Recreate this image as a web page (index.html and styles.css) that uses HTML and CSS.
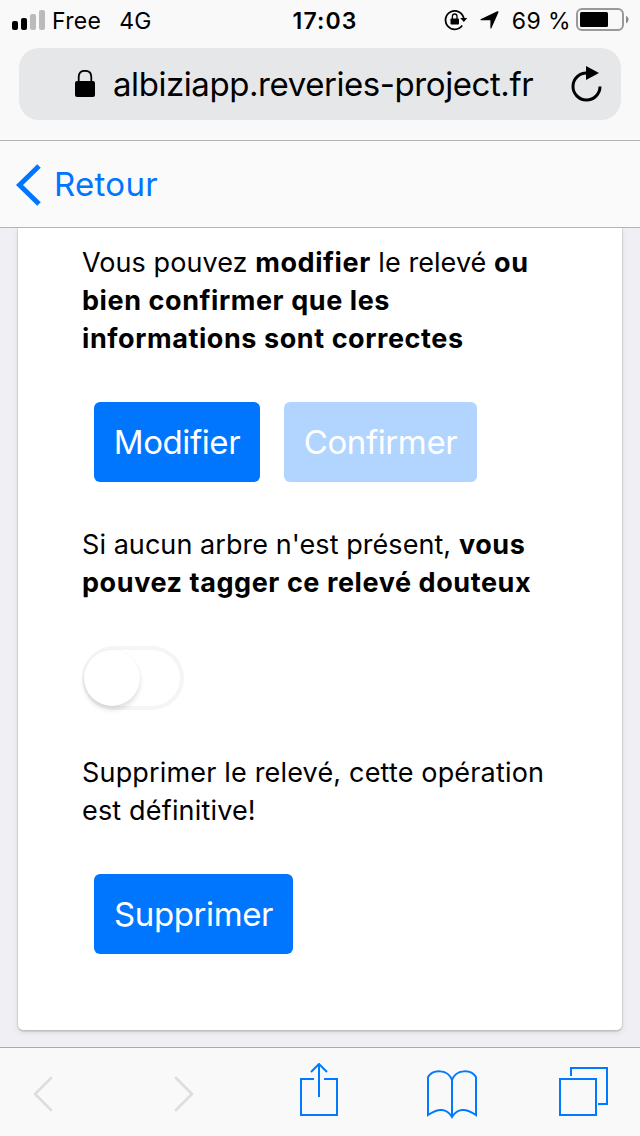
FILE: index.html
```html
<!DOCTYPE html>
<html lang="fr">
<head>
<meta charset="utf-8">
<title>Albiziapp</title>
<link rel="stylesheet" href="styles.css">
</head>
<body>
<header class="browser">
  <div class="status">
    <div class="carrier">
      <svg class="signal" width="34" height="20" viewBox="0 0 34 20"><rect x="0" y="11" width="6" height="9" rx="2"/><rect x="9" y="8" width="6" height="12" rx="2"/><rect class="dim" x="18" y="4" width="6" height="16" rx="2"/><rect class="dim" x="27" y="0" width="6" height="20" rx="2"/></svg>
      <span class="operator">Free</span><span class="network">4G</span>
    </div>
    <span class="clock">17:03</span>
    <div class="indicators">
      <svg width="24" height="22" viewBox="0 0 24 22"><path d="M18.2 16.5A9.2 9.2 0 1 1 19.8 9.5" fill="none" stroke="#000" stroke-width="1.8"/><path d="M16.2 9h7l-3.3 4z"/><rect x="6.5" y="9.5" width="8.5" height="6" rx=".8"/><path d="M8.4 10V7.3a2.3 2.3 0 0 1 4.6 0V10" fill="none" stroke="#000" stroke-width="1.3"/></svg>
      <svg class="location" width="19" height="18" viewBox="0 0 19 18"><path d="M17.3.3Q19 0 18.4 1.5L11.5 17Q10.7 18.4 10.4 16.8V9.3H1.2Q-.5 8.9 1.1 7.9z"/></svg>
      <span class="percent">69 %</span>
      <svg class="battery" width="53" height="24" viewBox="0 0 53 24"><rect x="1" y="1" width="46" height="21" rx="5" fill="none" stroke="#999" stroke-width="2"/><rect x="4" y="4" width="28" height="15" rx="1.5"/><path d="M50 7.5q5 4 0 8z" fill="#888"/></svg>
    </div>
  </div>
  <div class="address">
    <svg class="lock" width="20" height="28" viewBox="0 0 20 28"><rect y="11" width="20" height="16" rx="2"/><path d="M3.7 12V7q0-6.2 6.3-6.2T16.3 7v5" fill="none" stroke="#000" stroke-width="1.8"/></svg>
    <span class="url">albiziapp.reveries-project.fr</span>
    <svg class="reload" width="32" height="36" viewBox="0 0 32 36"><path d="M29 20.5A13.5 13.5 0 1 1 16 7" fill="none" stroke="#000" stroke-width="3"/><path d="M15 0l13 7-13 7z"/></svg>
  </div>
</header>
<nav class="navbar">
  <svg width="26" height="42" viewBox="0 0 26 42"><path d="M23 2L3.5 21 23 40" fill="none" stroke="#0076ff" stroke-width="5"/></svg>
  <span class="back">Retour</span>
</nav>
<main class="page">
  <section class="card">
    <p class="text">Vous pouvez <b>modifier</b> le relevé <b>ou</b><br><b>bien confirmer que les</b><br><b>informations sont correctes</b></p>
    <div class="actions">
      <button class="btn modify">Modifier</button>
      <button class="btn confirm" disabled>Confirmer</button>
    </div>
    <p class="text second">Si aucun arbre n'est présent, <b>vous</b><br><b>pouvez tagger ce relevé douteux</b></p>
    <div class="switch"><span class="knob"></span></div>
    <p class="text third">Supprimer le relevé, cette opération<br>est définitive!</p>
    <div class="actions">
      <button class="btn delete">Supprimer</button>
    </div>
  </section>
</main>
<footer class="toolbar">
  <svg class="previous" width="20" height="36" viewBox="0 0 20 36"><path d="M18 2L2 18l16 16" class="arrow"/></svg>
  <svg class="forward" width="20" height="36" viewBox="0 0 20 36"><path d="M2 2l16 16L2 34" class="arrow"/></svg>
  <svg class="share" width="38" height="54" viewBox="0 0 38 54"><path d="M14 16H1v36h36V16H24M19 34V2M11 9l8-8 8 8" class="line"/></svg>
  <svg class="book" width="50" height="50" viewBox="0 0 50 50"><path d="M25 47V10C21-1 6-1 1 7V45Q17 34 25 47Q33 34 49 45V7C44-1 29-1 25 10" class="line"/></svg>
  <svg class="tabs" width="49" height="49" viewBox="0 0 49 49"><path d="M1 12h36v36H1zM12 9V1h36v36h-9" class="line"/></svg>
</footer>
</body>
</html>
```
FILE: styles.css
```css
* { box-sizing: border-box; }
body { margin: 0; width: 640px; height: 1136px; display: flex; flex-direction: column; overflow: hidden; background: #efeff4; color: #000; font-family: Inter, "Liberation Sans", sans-serif; }
svg { display: block; flex: none; }
span, b, button { white-space: nowrap; }

.browser { height: 141px; background: #f9f9f9; border-bottom: 1px solid #b2b2b2; }
.status { height: 40px; margin-bottom: 8px; display: grid; grid-template-columns: 1fr auto 1fr; align-items: center; padding: 0 11px 0 12px; font-size: 23px; line-height: 38px; }
.carrier { display: flex; align-items: center; }
.operator { margin-left: 6px; padding-top: 2px; letter-spacing: .3px; }
.network { margin-left: 18px; padding-top: 2px; letter-spacing: .3px; }
.dim { fill: #bbb; }
.clock { padding: 2px 0 0 9px; font-weight: 600; letter-spacing: 1.1px; }
.indicators { display: flex; align-items: center; justify-content: flex-end; }
.location { margin-left: 12px; }
.percent { margin-left: 13px; padding-top: 2px; letter-spacing: .4px; }
.battery { margin-left: 5px; }
.address { height: 72px; margin: 0 19px; padding: 0 18px 0 56px; border-radius: 20px; background: #e6e7e9; display: flex; align-items: center; }
.lock { margin-top: -1px; }
.url { margin-left: 18px; font-size: 33px; letter-spacing: -.43px; }
.reload { margin-left: auto; margin-top: 0; }

.navbar { height: 87px; padding: 1px 0 0 16px; display: flex; align-items: center; background: #fafafa; border-bottom: 1px solid #b2b2b2; color: #0076ff; }
.back { margin: -2px 0 0 12px; font-size: 33px; letter-spacing: .3px; }

.page { height: 819px; padding: 0 18px; overflow: hidden; }
.card { height: 802px; padding: 16px 64px 0; background: #fff; border-radius: 0 0 5px 5px; box-shadow: 0 2px 1px rgba(0, 0, 0, .08), 0 0 1px 1px rgba(0, 0, 0, .08), 0 2px 6px rgba(0, 0, 0, .1); }
.text { margin: 0; font-size: 27px; line-height: 38px; letter-spacing: .06px; }
.text b { letter-spacing: .58px; }
.actions { display: flex; gap: 24px; margin: 44px 0 0 12px; }
.btn { height: 80px; padding: 0; border: 0; border-radius: 6px; background: #0076ff; color: #fff; font: 400 33px/80px Inter, sans-serif; letter-spacing: -.4px; }
.modify { width: 166px; }
.confirm { width: 193px; opacity: .3; }
.delete { width: 199px; }
.second { margin-top: 44px; }
.switch { width: 102px; height: 64px; margin-top: 44px; padding: 4px 2px; border-radius: 32px; box-shadow: inset 0 0 0 4px #f5f5f5; }
.knob { display: block; width: 56px; height: 56px; border-radius: 50%; background: #fff; box-shadow: 0 4px 5px rgba(0, 0, 0, .12), 0 0 2px rgba(0, 0, 0, .05); }
.third { margin-top: 44px; letter-spacing: .17px; }

.toolbar { height: 89px; padding: 0 32px 0 33px; background: #f9f9f9; border-top: 1px solid #a8a8ad; display: flex; align-items: center; }
.arrow { fill: none; stroke: #ddd; stroke-width: 2.6; stroke-linecap: round; }
.line { fill: none; stroke: #007aff; stroke-width: 2; }
.previous { margin-top: 3px; }
.forward { margin: 3px 0 0 121px; }
.share { margin-left: 106px; margin-top: -5px; }
.book { margin-left: 89px; margin-top: 5px; }
.tabs { margin-left: auto; margin-top: -2px; }
```
